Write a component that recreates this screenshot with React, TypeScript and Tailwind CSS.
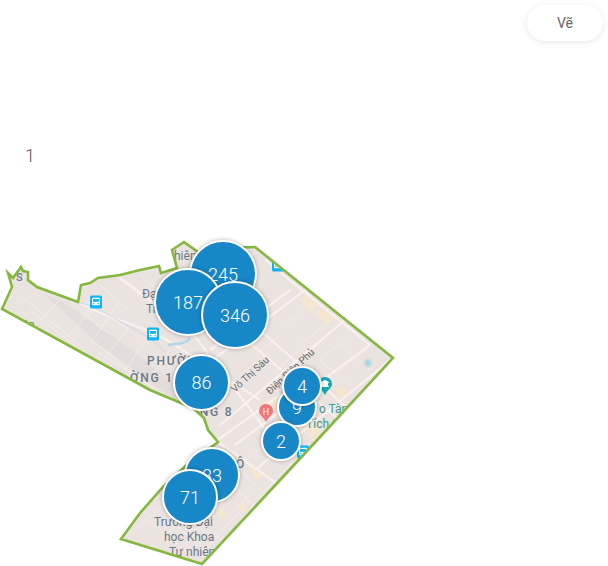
const outline =
  "2,309 12,287 8,273 13,278 21,267 23,271 28,272 28,280 37,287 78,302 81,285 90,283 98,278 120,275 140,270 159,266 161,273 177,268 172,250 184,242 198,252 220,248 255,247 393,358 320,437 202,564 121,539 140,513 163,487 190,462 210,448 218,442 208,430 204,418 193,408 150,390";

const majorRoads = [
  "M120 278 L190 330 L285 455",
  "M78 302 C110 320 145 325 175 345 L260 400",
  "M235 330 L345 425",
  "M210 350 L290 290",
  "M180 385 L305 290 L330 270",
  "M220 425 L345 320",
  "M235 445 L370 345",
  "M190 460 L280 395",
  "M255 470 L393 358",
  "M150 390 L218 442 L300 500",
  "M225 300 L300 365 L360 420",
  "M265 260 L370 345",
];

const minorRoads = [
  "M20 295 L80 345","M45 280 L110 335","M60 300 L40 320","M90 310 L70 335","M110 315 L90 345","M130 325 L105 358",
  "M150 335 L125 370","M170 350 L145 385","M100 285 L130 312","M125 282 L155 310","M140 275 L175 305","M85 300 L150 345",
  "M95 350 L160 392","M30 310 L100 365","M255 265 L230 290","M290 290 L265 310","M310 305 L280 330","M330 320 L300 345",
  "M350 335 L320 360","M365 350 L335 375","M300 375 L330 400","M320 360 L350 385","M340 345 L370 370","M290 420 L320 445",
  "M270 440 L240 465","M255 490 L225 520","M240 470 L270 500","M215 470 L265 515","M195 525 L240 550","M170 520 L215 560",
  "M150 520 L190 555","M250 500 L205 550","M235 490 L185 535","M275 480 L225 540","M305 450 L255 500","M255 355 L280 335",
  "M240 375 L265 355","M270 375 L300 350","M225 390 L250 370","M135 530 L175 495","M160 540 L200 505","M180 548 L222 510",
  "M105 295 L85 320","M120 300 L100 330","M55 320 L35 340","M75 340 L55 325","M118 360 L90 340","M140 380 L115 360",
];

const blocks = [
  "M300 300 l8 -6 l10 12 l-8 6 z","M315 312 l8 -5 l12 12 l-8 6 z","M262 402 l14 -6 l6 12 l-12 6 z","M305 425 l10 -5 l8 16 l-10 4 z",
  "M250 470 l8 -4 l5 10 l-8 4 z","M215 510 l7 -3 l5 9 l-7 3 z","M238 505 l6 -3 l4 8 l-6 3 z","M178 290 l8 -2 l2 7 l-8 2 z",
  "M335 390 l8 -4 l5 8 l-8 4 z","M280 420 l7 -4 l5 7 l-7 4 z",
];

const markers = [
  { n: 245, c: "left-[189px] top-[10px] size-[68px]" },
  { n: 187, c: "left-[154px] top-[38px] size-[68px]" },
  { n: 346, c: "left-[201px] top-[51px] size-[68px]" },
  { n: 86, c: "left-[173px] top-[124px] size-[57px]" },
  { n: 9, c: "left-[277px] top-[157px] size-[40px]" },
  { n: 4, c: "left-[282px] top-[136px] size-[40px]" },
  { n: 2, c: "left-[261px] top-[191px] size-[40px]" },
  { n: 83, c: "left-[184px] top-[217px] size-[56px]" },
  { n: 71, c: "left-[162px] top-[239px] size-[56px]" },
];

function Bus({ x, y }: { x: number; y: number }) {
  return (
    <g transform={`translate(${x} ${y})`}>
      <rect x="-6" y="-6.5" width="12" height="13" rx="1.5" fill="#11b5f5" />
      <rect x="-4" y="-4.2" width="8" height="7.4" rx="1.2" fill="#fff" />
      <rect x="-3" y="-3" width="6" height="2.8" fill="#11b5f5" />
      <rect x="-3" y="1.2" width="1.5" height="1" fill="#11b5f5" />
      <rect x="1.5" y="1.2" width="1.5" height="1" fill="#11b5f5" />
    </g>
  );
}

export default function App() {
  return (
    <div className="flex h-[566px] w-[608px] flex-col overflow-hidden bg-white font-['Roboto',sans-serif]">
      <div className="flex h-[146px] shrink-0 items-start justify-end pr-[5px] pt-[5px]">
        <button className="flex h-[36px] w-[76px] items-center justify-center rounded-full bg-white text-[14px] text-[#666] shadow-[0_1px_6px_rgba(0,0,0,0.1)]">
          Vẽ
        </button>
      </div>
      <div className="h-[84px] shrink-0 pl-[25px] text-[18px] font-light leading-[20px] text-[#555]">1</div>
      <div className="relative h-[336px] w-full shrink-0">
        <svg viewBox="0 230 608 336" className="absolute inset-0 h-full w-full">
          <defs>
            <clipPath id="ward">
              <polygon points={outline} />
            </clipPath>
          </defs>
          <polygon points={outline} fill="#ebe3e0" />
          <g clipPath="url(#ward)">
            <path d="M45 295 L60 300 L125 345 L195 400 L175 400 L100 345 Z" fill="#e2dcda" />
            {blocks.map((d) => (
              <path key={d} d={d} fill="#f5e6d0" />
            ))}
            {minorRoads.map((d) => (
              <path key={d} d={d} fill="none" stroke="#f5eeeb" strokeWidth="0.8" />
            ))}
            {majorRoads.map((d) => (
              <path key={d} d={d} fill="none" stroke="#faf1ee" strokeWidth="2.2" />
            ))}
            <path d="M78 302 C105 310 120 322 150 338 L165 352" fill="none" stroke="#c3d8e8" strokeWidth="1" />
            <path d="M168 345 C178 343 185 345 190 338" fill="none" stroke="#b3d5ee" strokeWidth="2.5" />
            <circle cx="368" cy="363" r="5" fill="#d5e3d6" />
            <circle cx="368" cy="363" r="3" fill="#a9d3ec" />
            <g fontFamily="Roboto, sans-serif" fill="#6b7a89">
              <text x="142" y="298" fontSize="12">Đại</text>
              <text x="146" y="313" fontSize="12">Tr</text>
              <text x="174" y="260" fontSize="12">hiêm</text>
              <text x="147" y="365" fontSize="12" fontWeight="500" letterSpacing="1.8">PHƯỜNG</text>
              <text x="130" y="382" fontSize="12" fontWeight="500" letterSpacing="1.8">ỜNG 14</text>
              <text x="190" y="416" fontSize="12" fontWeight="500" letterSpacing="1.8">UNG 8</text>
              <text x="236" y="468" fontSize="12" fontWeight="500">Ô</text>
              <text x="154" y="526" fontSize="12">Trường Đại</text>
              <text x="164" y="541" fontSize="12">học Khoa</text>
              <text x="169" y="556" fontSize="12">Tự nhiên</text>
              <text x="20" y="328" fontSize="11" fill="#4d9468">iên</text>
              <text x="16" y="281" fontSize="11" fontWeight="500">S</text>
              <text transform="translate(235 393) rotate(-43)" fontSize="10" fill="#666">Võ Thị Sáu</text>
              <text transform="translate(270 395) rotate(-43)" fontSize="10" fill="#666">Điện Biên Phủ</text>
              <text x="319" y="413" fontSize="12" fill="#3a9d95">o Tàng</text>
              <text x="306" y="428" fontSize="12" fill="#3a9d95">Tích C</text>
            </g>
            <Bus x={96} y={302} />
            <Bus x={153} y={334} />
            <Bus x={278} y={265} />
            <Bus x={303} y={452} />
            <path d="M266 422 C263 416 259 415 259 411 A7 7 0 0 1 273 411 C273 415 269 416 266 422 Z" fill="#f0767b" />
            <text x="266" y="415" textAnchor="middle" fontFamily="Roboto, sans-serif" fontSize="9" fill="#fff">H</text>
            <path d="M325 395 C322 389 318 388 318 384 A7 7 0 0 1 332 384 C332 388 328 389 325 395 Z" fill="#18a8b4" />
            <path d="M321 387 h8 v-1 h-1 v-3 h1 v-1 l-4 -2 l-4 2 v1 h1 v3 h-1 z" fill="#fff" />
          </g>
          <polygon points={outline} fill="none" stroke="#84b83e" strokeWidth="2.6" strokeLinejoin="miter" />
        </svg>
        {markers.map((m) => (
          <div
            key={m.n}
            className={`absolute flex items-center justify-center rounded-full border-2 border-white bg-[#1787c8] text-[18px] font-light text-white shadow-[0_0_4px_rgba(0,0,0,0.3)] ${m.c}`}
          >
            {m.n}
          </div>
        ))}
      </div>
    </div>
  );
}
